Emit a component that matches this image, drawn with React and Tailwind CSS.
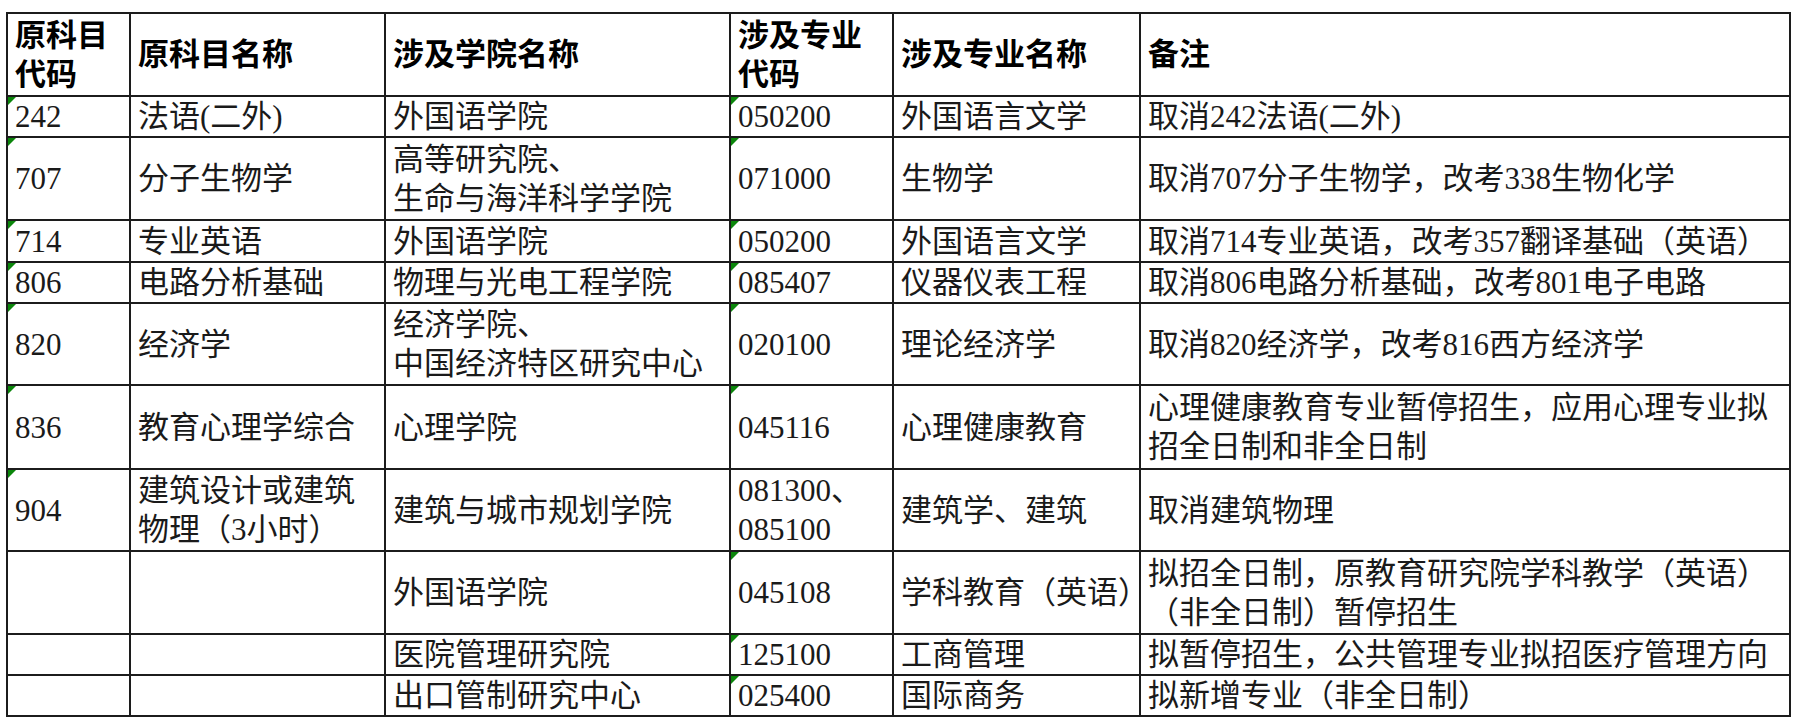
const rows = [
  { h: 41, code: '242', name: ['法语(二外)'], college: ['外国语学院'], mcode: ['050200'], tri: true, major: ['外国语言文学'], note: ['取消242法语(二外)'] },
  { h: 83, code: '707', name: ['分子生物学'], college: ['高等研究院、', '生命与海洋科学学院'], mcode: ['071000'], tri: true, major: ['生物学'], note: ['取消707分子生物学，改考338生物化学'] },
  { h: 42, code: '714', name: ['专业英语'], college: ['外国语学院'], mcode: ['050200'], tri: true, major: ['外国语言文学'], note: ['取消714专业英语，改考357翻译基础（英语）'] },
  { h: 41, code: '806', name: ['电路分析基础'], college: ['物理与光电工程学院'], mcode: ['085407'], tri: true, major: ['仪器仪表工程'], note: ['取消806电路分析基础，改考801电子电路'] },
  { h: 82, code: '820', name: ['经济学'], college: ['经济学院、', '中国经济特区研究中心'], mcode: ['020100'], tri: true, major: ['理论经济学'], note: ['取消820经济学，改考816西方经济学'] },
  { h: 84, code: '836', name: ['教育心理学综合'], college: ['心理学院'], mcode: ['045116'], tri: true, major: ['心理健康教育'], note: ['心理健康教育专业暂停招生，应用心理专业拟', '招全日制和非全日制'] },
  { h: 82, code: '904', name: ['建筑设计或建筑', '物理（3小时）'], college: ['建筑与城市规划学院'], mcode: ['081300、', '085100'], tri: false, major: ['建筑学、建筑'], note: ['取消建筑物理'] },
  { h: 83, code: '', name: [], college: ['外国语学院'], mcode: ['045108'], tri: true, major: ['学科教育（英语）'], note: ['拟招全日制，原教育研究院学科教学（英语）', '（非全日制）暂停招生'] },
  { h: 41, code: '', name: [], college: ['医院管理研究院'], mcode: ['125100'], tri: true, major: ['工商管理'], note: ['拟暂停招生，公共管理专业拟招医疗管理方向'] },
  { h: 41, code: '', name: [], college: ['出口管制研究中心'], mcode: ['025400'], tri: true, major: ['国际商务'], note: ['拟新增专业（非全日制）'] },
]

function Tri() {
  return <span className="absolute left-0 top-0 h-0 w-0 border-t-[8px] border-r-[8px] border-t-[#0b860b] border-r-transparent" />
}

function Lines({ items }) {
  return items.map((t, i) => (
    <div key={i} className="h-[39px] overflow-visible whitespace-nowrap leading-[39px]">{t}</div>
  ))
}

const cell = 'relative border-2 border-[#1c1c1c] px-[7px] py-0 align-middle text-left'

export default function App() {
  return (
    <div className="min-h-screen bg-white pl-[6px] pt-[12px]" style={{ fontFamily: '"Liberation Serif", "Noto Sans CJK SC", serif' }}>
      <table className="table-fixed border-collapse text-[31px] leading-[39px] text-[#1a1a1a]" style={{ width: 1783 }}>
        <colgroup>
          <col className="w-[123px]" />
          <col className="w-[255px]" />
          <col className="w-[345px]" />
          <col className="w-[163px]" />
          <col className="w-[247px]" />
          <col className="w-[650px]" />
        </colgroup>
        <thead>
          <tr className="h-[83px] font-bold text-black">
            <th className={cell}><Lines items={['原科目', '代码']} /></th>
            <th className={cell}><Lines items={['原科目名称']} /></th>
            <th className={cell}><Lines items={['涉及学院名称']} /></th>
            <th className={cell}><Lines items={['涉及专业', '代码']} /></th>
            <th className={cell}><Lines items={['涉及专业名称']} /></th>
            <th className={cell}><Lines items={['备注']} /></th>
          </tr>
        </thead>
        <tbody>
          {rows.map((r, i) => (
            <tr key={i} style={{ height: r.h }}>
              <td className={cell}>{r.code && <Tri />}<Lines items={r.code ? [r.code] : []} /></td>
              <td className={cell}><Lines items={r.name} /></td>
              <td className={cell}><Lines items={r.college} /></td>
              <td className={cell}>{r.tri && <Tri />}<Lines items={r.mcode} /></td>
              <td className={cell}><Lines items={r.major} /></td>
              <td className={cell}><Lines items={r.note} /></td>
            </tr>
          ))}
        </tbody>
      </table>
    </div>
  )
}
